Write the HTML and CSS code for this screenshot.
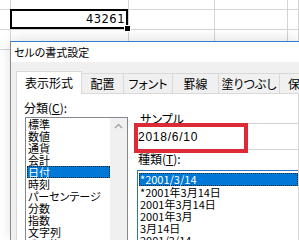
FILE: index.html
```html
<!DOCTYPE html>
<html lang="ja">
<head>
    <meta charset="UTF-8">
    <title>セルの書式設定</title>
    <link rel="stylesheet" href="styles.css">
</head>
<body>

    <div class="sheet">
        <div class="cell"></div><div class="cell"></div><div class="cell"></div><div class="cell"></div><div class="cell"></div>
        <div class="cell"></div>
        <div class="cell cell-active">43261<span class="fill-handle"></span></div>
        <div class="cell"></div><div class="cell"></div><div class="cell"></div>
        <div class="cell"></div><div class="cell"></div><div class="cell"></div><div class="cell"></div><div class="cell"></div>
    </div>

    <div class="dialog">
        <div class="title-bar">セルの書式設定</div>
        <div class="dialog-body">
            <div class="tabs">
                <div class="tab tab-active w-format">表示形式</div>
                <div class="tab w-align">配置</div>
                <div class="tab w-font">フォント</div>
                <div class="tab w-border">罫線</div>
                <div class="tab w-fill">塗りつぶし</div>
                <div class="tab w-protect">保護</div>
            </div>
            <div class="panel">
                <div class="col-left">
                    <div class="label label-category">分類(<u>C</u>):</div>
                    <div class="listbox category-list">
                        <ul class="items">
                            <li>標準</li>
                            <li>数値</li>
                            <li>通貨</li>
                            <li>会計</li>
                            <li class="selected">日付</li>
                            <li>時刻</li>
                            <li>パーセンテージ</li>
                            <li>分数</li>
                            <li>指数</li>
                            <li>文字列</li>
                            <li>その他</li>
                        </ul>
                        <div class="scrollbar">
                            <svg width="17" height="17" viewBox="0 0 17 17"><path d="M5 10 L8.5 6.5 L12 10" fill="none" stroke="#a3a3a3" stroke-width="1.4"/></svg>
                        </div>
                    </div>
                </div>
                <div class="col-right">
                    <div class="label label-sample">サンプル</div>
                    <div class="sample-box">
                        2018/6/10
                        <div class="highlight"></div>
                    </div>
                    <div class="label label-type">種類(<u>T</u>):</div>
                    <div class="listbox type-list">
                        <ul class="items">
                            <li class="selected">*2001/3/14</li>
                            <li>*2001年3月14日</li>
                            <li>2001年3月14日</li>
                            <li>2001年3月</li>
                            <li>3月14日</li>
                            <li>2001/3/14</li>
                        </ul>
                    </div>
                </div>
            </div>
        </div>
    </div>

</body>
</html>
```

FILE: styles.css
```css
body {
    margin: 0;
    width: 299px;
    height: 240px;
    overflow: hidden;
    position: relative;
    background: #ffffff;
    font-family: "Noto Sans CJK JP", sans-serif;
    font-feature-settings: "palt";
    color: #000000;
}

.sheet {
    display: grid;
    grid-template-columns: 11px 118px 86px 73px 11px;
    grid-template-rows: 10px 20px 20px;
}

.cell {
    border-right: 1px solid #d4d4d4;
    border-bottom: 1px solid #d4d4d4;
}

.cell-active {
    position: relative;
    font-family: "DejaVu Sans", sans-serif;
    font-size: 11.5px;
    letter-spacing: 0.5px;
    line-height: 19px;
    text-align: right;
    padding-right: 3px;
}

.cell-active::after {
    content: "";
    position: absolute;
    top: -1px;
    left: -1px;
    right: 0;
    bottom: 0;
    border: 2px solid #000000;
}

.fill-handle {
    position: absolute;
    right: -3px;
    bottom: -3px;
    width: 5px;
    height: 5px;
    background: #000000;
    border: 1px solid #ffffff;
    z-index: 1;
}

.dialog {
    position: absolute;
    left: 10px;
    top: 41px;
    width: 288px;
    height: 198px;
    border-top: 1px solid #2c7fd0;
    border-left: 1px solid #8a8a8a;
    background: #ffffff;
    box-shadow: 0 -2px 12px rgba(0, 0, 0, 0.12);
    overflow: hidden;
}

.title-bar {
    height: 20px;
    line-height: 20px;
    padding-left: 3px;
    font-size: 11px;
}

.dialog-body {
    background: #f0f0f0;
    padding: 11px 0 0 5px;
    height: 180px;
}

.tabs {
    display: flex;
    height: 20px;
    position: relative;
    z-index: 1;
}

.tab {
    flex-shrink: 0;
    height: 20px;
    box-sizing: border-box;
    border: 1px solid #d9d9d9;
    border-bottom: none;
    margin-right: -1px;
    background: #f0f0f0;
    font-size: 12px;
    line-height: 19px;
    text-align: center;
    white-space: nowrap;
    overflow: hidden;
}

.tab-active {
    background: #ffffff;
    height: 23px;
    margin-top: -2px;
    line-height: 22px;
}

.w-format { width: 66px; }
.w-align { width: 43px; }
.w-font { width: 50px; }
.w-border { width: 47px; }
.w-fill { width: 62px; }
.w-protect { width: 40px; text-align: left; padding-left: 8px; }

.panel {
    display: grid;
    grid-template-columns: 104px 1fr;
    column-gap: 9px;
    background: #ffffff;
    border: 1px solid #d9d9d9;
    padding-left: 7px;
    height: 160px;
}

.label {
    font-size: 12px;
    line-height: 12px;
    white-space: nowrap;
}

.label-category {
    margin-top: 8px;
}

.label-sample {
    margin-top: 19px;
    padding-left: 3px;
}

.label-type {
    margin-top: 3px;
    padding-left: 1px;
}

.listbox {
    display: flex;
    background: #ffffff;
    overflow: hidden;
}

.category-list {
    margin-top: 3px;
    margin-left: 1px;
    height: 130px;
    border: 1px solid #828790;
}

.items {
    list-style: none;
    margin: 0;
    padding: 0;
    flex: 1;
    font-size: 11px;
    line-height: 12px;
}

.items li {
    padding-left: 1px;
    white-space: nowrap;
}

.category-list .items li {
    margin-left: 1px;
}

.items li.selected {
    background: #0078d7;
    color: #ffffff;
    outline: 1px dotted #222222;
    outline-offset: -1px;
}

.scrollbar {
    width: 17px;
    background: #f0f0f0;
}

.scrollbar svg {
    display: block;
}

.sample-box {
    position: relative;
    margin-top: -2px;
    height: 23px;
    padding-top: 2px;
    line-height: 23px;
    border-top: 1px solid #d4d4d4;
    border-bottom: 1px solid #d4d4d4;
    font-family: "Liberation Sans", sans-serif;
    font-size: 12px;
    letter-spacing: 0.75px;
    padding-left: 1px;
}

.highlight {
    position: absolute;
    left: -3px;
    top: -1px;
    width: 114px;
    height: 30px;
    box-sizing: border-box;
    border: 4px solid #dc2b36;
}

.type-list {
    margin-top: 5px;
    height: 80px;
    border-top: 1px solid #2c73c2;
    border-left: 1px solid #2c73c2;
    padding: 2px 0 0 1px;
}

.type-list .items li.selected {
    line-height: 13px;
}
```
